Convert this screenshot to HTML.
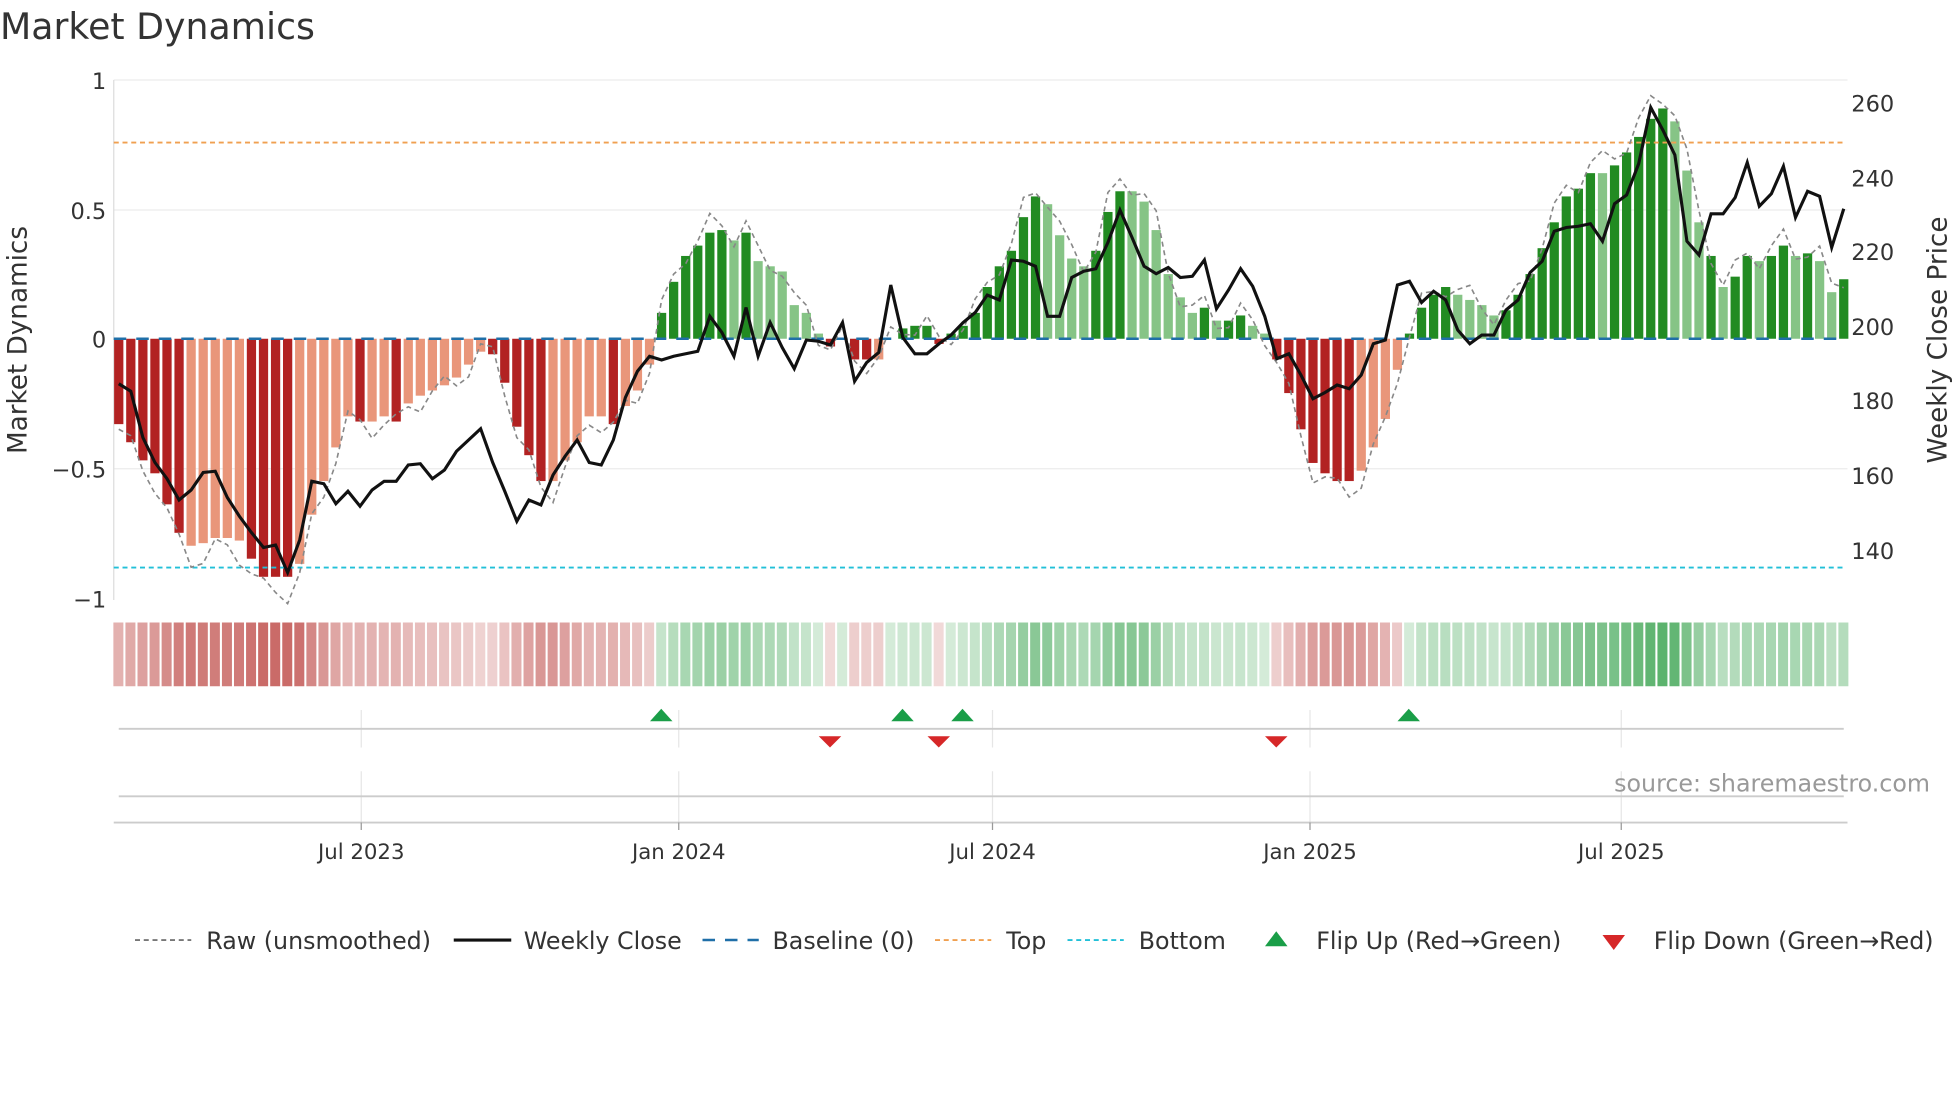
<!DOCTYPE html>
<html><head><meta charset="utf-8"><style>
html,body{margin:0;padding:0;background:#fff;}
svg{display:block;font-family:"DejaVu Sans","Liberation Sans",sans-serif;}
</style></head><body>
<svg id="s" width="1960" height="1102" viewBox="0 0 1568 881.6" xmlns="http://www.w3.org/2000/svg">
<rect width="1568" height="882" fill="#fff"/>
<text x="0" y="31" font-size="29" fill="#333">Market Dynamics</text>
<g stroke="#ececec" stroke-width="1">
<line x1="91" y1="168" x2="1478" y2="168"/><line x1="91" y1="375" x2="1478" y2="375"/>
<line x1="91" y1="64" x2="1478" y2="64"/>
</g>
<line x1="91" y1="64" x2="91" y2="480" stroke="#ddd"/>
<g font-size="18" fill="#333" text-anchor="end">
<text x="85" y="71">1</text><text x="85" y="175">0.5</text><text x="85" y="278">0</text><text x="85" y="382">−0.5</text><text x="85" y="486">−1</text>
</g>
<g font-size="18" fill="#333">
<text x="1481" y="89">260</text><text x="1481" y="149">240</text><text x="1481" y="208">220</text><text x="1481" y="268">200</text><text x="1481" y="327">180</text><text x="1481" y="387">160</text><text x="1481" y="447">140</text>
</g>
<text transform="translate(21,272) rotate(-90)" font-size="21" fill="#333" text-anchor="middle">Market Dynamics</text>
<text transform="translate(1557,272) rotate(-90)" font-size="21" fill="#333" text-anchor="middle">Weekly Close Price</text>
<g id="bars"></g>
<line x1="91" y1="114" x2="1475" y2="114" stroke="#f0a050" stroke-width="1.5" stroke-dasharray="4,3"/>
<line x1="91" y1="454" x2="1475" y2="454" stroke="#22c0d8" stroke-width="1.5" stroke-dasharray="4,3"/>
<line x1="91" y1="271" x2="1475" y2="271" stroke="#1f6fa8" stroke-width="2" stroke-dasharray="10,8"/>
<polyline id="raw" fill="none" stroke="#888" stroke-width="1.3" stroke-dasharray="4,3"/>
<polyline id="px" fill="none" stroke="#111" stroke-width="2.5"/>
<g id="heat"></g>
<g stroke="#e6e6e6"><line x1="289" y1="568" x2="289" y2="598"/><line x1="543" y1="568" x2="543" y2="598"/><line x1="794" y1="568" x2="794" y2="598"/><line x1="1048" y1="568" x2="1048" y2="598"/><line x1="1297" y1="568" x2="1297" y2="598"/>
<line x1="289" y1="617" x2="289" y2="658"/><line x1="543" y1="617" x2="543" y2="658"/><line x1="794" y1="617" x2="794" y2="658"/><line x1="1048" y1="617" x2="1048" y2="658"/><line x1="1297" y1="617" x2="1297" y2="658"/></g>
<line x1="95" y1="583" x2="1475" y2="583" stroke="#ccc" stroke-width="1.5"/>
<line x1="95" y1="637" x2="1475" y2="637" stroke="#ccc" stroke-width="1.5"/>
<line x1="91" y1="658" x2="1478" y2="658" stroke="#ccc" stroke-width="1.5"/>
<g stroke="#999"><line x1="289" y1="658" x2="289" y2="664"/><line x1="543" y1="658" x2="543" y2="664"/><line x1="794" y1="658" x2="794" y2="664"/><line x1="1048" y1="658" x2="1048" y2="664"/><line x1="1297" y1="658" x2="1297" y2="664"/></g>
<g font-size="17" fill="#333" text-anchor="middle"><text x="289" y="687">Jul 2023</text><text x="543" y="687">Jan 2024</text><text x="794" y="687">Jul 2024</text><text x="1048" y="687">Jan 2025</text><text x="1297" y="687">Jul 2025</text></g>
<g fill="#1a9e48"><path d="M520,577 L529,567 L538,577Z"/><path d="M713,577 L722,567 L731,577Z"/><path d="M761,577 L770,567 L779,577Z"/><path d="M1118,577 L1127,567 L1136,577Z"/></g>
<g fill="#d62728"><path d="M655,589 L673,589 L664,598Z"/><path d="M742,589 L760,589 L751,598Z"/><path d="M1012,589 L1030,589 L1021,598Z"/></g>
<text x="1544" y="633" font-size="19" fill="#999" text-anchor="end">source: sharemaestro.com</text>
<g font-size="19" fill="#333">
<line x1="108" y1="752" x2="153" y2="752" stroke="#777" stroke-width="1.5" stroke-dasharray="4,3"/><text x="165" y="759">Raw (unsmoothed)</text>
<line x1="363" y1="752" x2="409" y2="752" stroke="#111" stroke-width="2.5"/><text x="419" y="759">Weekly Close</text>
<line x1="562" y1="752" x2="607" y2="752" stroke="#1f6fa8" stroke-width="2" stroke-dasharray="10,8"/><text x="618" y="759">Baseline (0)</text>
<line x1="748" y1="752" x2="793" y2="752" stroke="#f0a050" stroke-width="1.5" stroke-dasharray="4,3"/><text x="805" y="759">Top</text>
<line x1="854" y1="752" x2="899" y2="752" stroke="#22c0d8" stroke-width="1.5" stroke-dasharray="4,3"/><text x="911" y="759">Bottom</text>
<path d="M1012,757 L1021,745 L1030,757Z" fill="#1a9e48"/><text x="1053" y="759">Flip Up (Red→Green)</text>
<path d="M1282,748 L1300,748 L1291,760Z" fill="#d62728"/><text x="1323" y="759">Flip Down (Green→Red)</text>
</g>
</svg>
<script>
var v=[[-.33,1],[-.40,1],[-.47,1],[-.52,1],[-.64,1],[-.75,1],[-.80,0],[-.79,0],[-.77,0],[-.77,0],[-.78,0],[-.85,1],[-.92,1],[-.92,1],[-.92,1],[-.87,0],[-.68,0],[-.55,0],[-.42,0],[-.30,0],[-.32,1],[-.32,0],[-.30,0],[-.32,1],[-.25,0],[-.22,0],[-.20,0],[-.18,0],[-.15,0],[-.10,0],[-.05,0],[-.06,1],[-.17,1],[-.34,1],[-.45,1],[-.55,1],[-.55,0],[-.47,0],[-.40,0],[-.30,0],[-.30,0],[-.33,1],[-.26,0],[-.20,0],[-.10,0],[.10,1],[.22,1],[.32,1],[.36,1],[.41,1],[.42,1],[.38,0],[.41,1],[.30,0],[.28,0],[.26,0],[.13,0],[.10,0],[.02,0],[-.03,1],[0,0],[-.08,1],[-.08,1],[-.08,0],[0,0],[.04,1],[.05,1],[.05,1],[-.02,1],[.02,1],[.05,1],[.10,1],[.20,1],[.28,1],[.34,1],[.47,1],[.55,1],[.52,0],[.40,0],[.31,0],[.28,0],[.34,1],[.49,1],[.57,1],[.57,0],[.53,0],[.42,0],[.25,0],[.16,0],[.10,0],[.12,1],[.07,0],[.07,1],[.09,1],[.05,0],[.02,0],[-.08,1],[-.21,1],[-.35,1],[-.48,1],[-.52,1],[-.55,1],[-.55,1],[-.51,0],[-.42,0],[-.31,0],[-.12,0],[.02,1],[.12,1],[.17,1],[.20,1],[.17,0],[.15,0],[.13,0],[.09,0],[.11,1],[.17,1],[.25,1],[.35,1],[.45,1],[.55,1],[.58,1],[.64,1],[.64,0],[.67,1],[.72,1],[.78,1],[.85,1],[.89,1],[.84,0],[.65,0],[.45,0],[.32,1],[.20,0],[.24,1],[.32,1],[.30,0],[.32,1],[.36,1],[.32,0],[.33,1],[.30,0],[.18,0],[.23,1]];
var py=[307,313,350,370,383,400,392,378,377,398,413,426,438,436,458,432,385,387,403,393,405,392,385,385,372,371,383,376,361,352,343,370,393,417,400,404,380,365,352,370,372,352,318,297,285,288,285,283,281,253,266,285,246,285,258,278,295,272,273,276,258,305,290,282,228,270,283,283,275,268,258,250,236,240,208,209,213,253,253,222,217,215,194,168,190,213,219,214,222,221,208,247,232,215,229,253,287,283,300,319,314,308,311,300,275,272,228,225,242,233,240,264,275,268,268,248,240,218,209,185,182,181,179,193,163,156,131,86,104,124,193,204,171,171,158,130,165,155,133,174,153,157,198,167];
var n=v.length,x0=95,x1=1475,dx=(x1-x0)/(n-1),b="",h="",pp="",rr="";
for(var i=0;i<n;i++){var x=x0+i*dx,val=v[i][0],d=v[i][1];
var c=val<0?(d?"#b22222":"#e9967a"):(d?"#228b22":"#86c486");
var y=271-val*207;b+='<rect x="'+(x-3.7)+'" y="'+Math.min(y,271)+'" width="7.4" height="'+Math.abs(271-y)+'" fill="'+c+'"/>';
var a=0.25+Math.min(1,Math.abs(val))*0.75;
h+='<rect x="'+(x-4.3)+'" y="498" width="8" height="51" fill="'+(val<0?"#c0504d":"#3aa34f")+'" fill-opacity="'+(Math.abs(val)<0.04?0.22:a*0.9)+'"/>';
pp+=x+","+py[i]+" ";
var r=val*1.06+Math.sin(i*1.7)*0.05;rr+=x+","+(271-r*207)+" ";}
document.getElementById("bars").innerHTML=b;document.getElementById("heat").innerHTML=h;
document.getElementById("px").setAttribute("points",pp);document.getElementById("raw").setAttribute("points",rr);
</script>
</body></html>
